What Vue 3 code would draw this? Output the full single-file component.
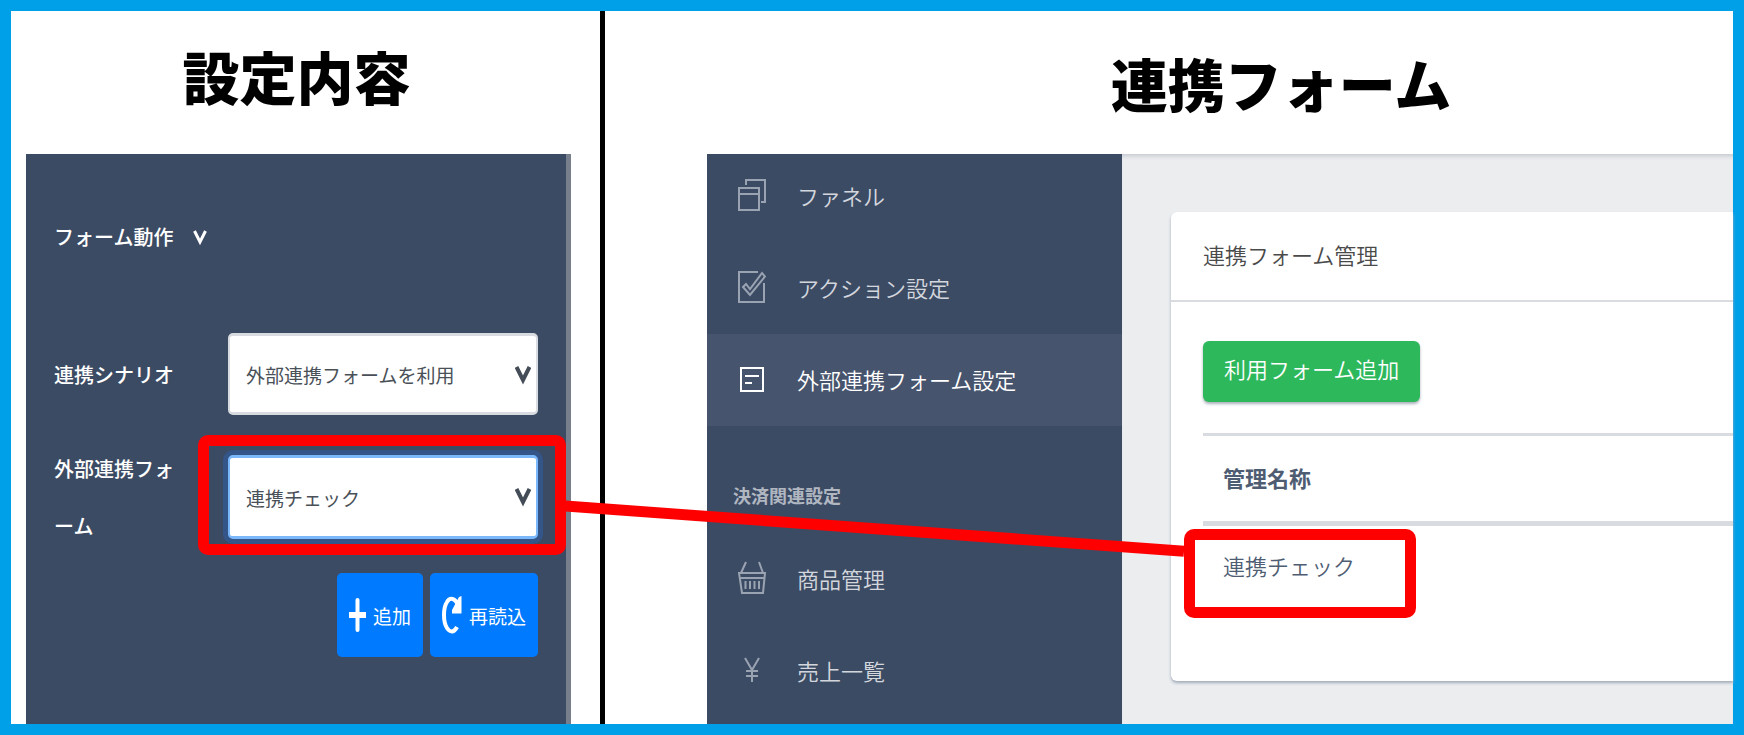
<template>
  <main ref="page" class="page">
    <section class="pane settings">
      <h1 class="title">設定内容</h1>
      <form class="panel" @submit.prevent>
        <button type="button" class="toggle">
          フォーム動作
          <svg class="toggle-icon" viewBox="0 0 14 18">
            <path d="M1.5 3 L7 14 L12.5 3" />
          </svg>
        </button>

        <div class="row">
          <label for="scenario">連携シナリオ</label>
          <div class="field">
            <select id="scenario" v-model="scenario">
              <option>外部連携フォームを利用</option>
            </select>
            <svg class="caret" viewBox="0 0 16 21">
              <path d="M1.5 2 L8 15 L14.5 2" />
            </svg>
          </div>
        </div>

        <div class="row">
          <label for="form">外部連携フォーム</label>
          <div class="field">
            <select id="form" v-model="form" class="focused">
              <option>連携チェック</option>
            </select>
            <svg class="caret" viewBox="0 0 16 21">
              <path d="M1.5 2 L8 15 L14.5 2" />
            </svg>
            <span ref="source" class="marker marker-field"></span>
          </div>
        </div>

        <div class="actions">
          <button type="button" class="btn">
            <svg class="plus" viewBox="0 0 17 34">
              <path d="M8.5 2 V32" />
              <path class="bar" d="M2 17 H15" />
            </svg>
            追加
          </button>
          <button type="button" class="btn">
            <svg class="reload" viewBox="0 0 20 38">
              <path d="M15 31 C12 37 8 36.500 5 32 C1 26 1 12 5 6 C8 1 13 2 16 9" />
              <path class="solid" d="M19.500 0 V17.500 H10 V14 L17 1 Z" />
            </svg>
            再読込
          </button>
        </div>
      </form>
    </section>

    <section class="pane linked">
      <h1 class="title">連携フォーム</h1>
      <div class="app">
        <nav class="sidebar">
          <a href="#funnel" class="item">
            <svg viewBox="0 0 28 34">
              <path d="M1 10 H21 V32 H1 Z M1 16 H21 M8 7 V2 H27 V24 H23" />
            </svg>
            ファネル
          </a>
          <a href="#action" class="item">
            <svg viewBox="0 0 28 34">
              <path d="M20 2 H1 V32 H26 V13" />
              <path d="M5 17 L8 14 L12 19 L24 3 L27 6.500 L12 25 Z" />
            </svg>
            アクション設定
          </a>
          <a href="#forms" class="item active">
            <svg viewBox="0 0 28 34">
              <path d="M3 6 H25 V29 H3 Z M7 14 H21 M7 21 H14" />
            </svg>
            外部連携フォーム設定
          </a>
          <h2 class="group">決済関連設定</h2>
          <a href="#products" class="item">
            <svg viewBox="0 0 28 34">
              <path d="M1 12 H27 L25 32 H4 Z M2 17 H26 M3 12 L8 1 M25 12 L21 1" />
              <path d="M7.500 20 V28 M12 20 V28 M16.500 20 V28 M21 20 V28" />
            </svg>
            商品管理
          </a>
          <a href="#sales" class="item">
            <svg viewBox="0 0 28 34">
              <path d="M7 5 L14 17 L21 5 M14 17 V29 M8 18 H20 M8 23 H20" />
            </svg>
            売上一覧
          </a>
        </nav>

        <div class="content">
          <div class="card">
            <h2 class="card-header">連携フォーム管理</h2>
            <div class="card-body">
              <button type="button" class="btn-add">利用フォーム追加</button>
              <table>
                <thead>
                  <tr>
                    <th scope="col">管理名称</th>
                  </tr>
                </thead>
                <tbody>
                  <tr v-for="name in forms" :key="name">
                    <td>
                      {{ name }}
                      <span ref="targets" class="marker marker-cell"></span>
                    </td>
                  </tr>
                </tbody>
              </table>
            </div>
          </div>
        </div>
      </div>
    </section>

    <svg class="connector">
      <line :x1="line.x1" :y1="line.y1" :x2="line.x2" :y2="line.y2" />
    </svg>
  </main>
</template>

<script setup>
import { ref, reactive, onMounted, onUnmounted } from "vue";

const scenario = ref("外部連携フォームを利用");
const form = ref("連携チェック");
const forms = ["連携チェック"];

const page = ref(null);
const source = ref(null);
const targets = ref([]);
const line = reactive({ x1: 0, y1: 0, x2: 0, y2: 0 });

// joins the right side of the first marker to the left side of the second
function updateLine() {
  const base = page.value.getBoundingClientRect();
  const from = source.value.getBoundingClientRect();
  const to = targets.value[0].getBoundingClientRect();
  const left = base.left + page.value.clientLeft;
  const top = base.top + page.value.clientTop;

  line.x1 = from.right - left - 4;
  line.y1 = from.top + from.height * 0.59 - top;
  line.x2 = to.left - left;
  line.y2 = to.top + to.height / 4 - top;
}

onMounted(() => {
  window.addEventListener("resize", updateLine);
  updateLine();
});

onUnmounted(() => {
  window.removeEventListener("resize", updateLine);
});
</script>

<style>
body {
  margin: 0;
}
</style>

<style scoped>
* {
  box-sizing: border-box;
}

.page {
  position: relative;
  display: grid;
  grid-template-columns: 594fr 1128fr;
  min-height: 100vh;
  border: 11px solid #00a0e9;
  background: #fff;
  font-family: "Noto Sans CJK JP", sans-serif;
}

button,
select {
  font-family: inherit;
}

.pane {
  display: flex;
  flex-direction: column;
  min-width: 0;
}

.title {
  margin: 0;
  height: 143px;
  color: #000;
  font-size: 57px;
  font-weight: 900;
  line-height: 128px;
  text-align: center;
  white-space: nowrap;
}

/* left side */
.settings {
  padding: 0 29px 0 15px;
  border-right: 5px solid #000;
}

.settings .title {
  padding-right: 4px;
}

.panel {
  flex: 1;
  display: flex;
  flex-direction: column;
  padding: 68px 28px 0;
  border-right: 5px solid #777f8d;
  background: #3c4b64;
  color: #fff;
  font-size: 20px;
}

.toggle {
  display: flex;
  align-items: center;
  align-self: flex-start;
  gap: 20px;
  margin-bottom: 81px;
  padding: 0;
  border: 0;
  background: none;
  color: #fff;
  font-size: 20px;
  font-weight: 500;
  line-height: 30px;
}

.toggle-icon {
  width: 14px;
  height: 18px;
  fill: none;
  stroke: #fff;
  stroke-width: 3;
}

.row {
  display: grid;
  grid-template-columns: 174fr 310fr;
  align-items: center;
  margin-bottom: 25px;
}

.row + .row {
  margin-bottom: 19px;
}

.row label {
  padding-right: 50px;
  font-weight: 500;
  line-height: 57px;
  line-break: anywhere;
}

.field {
  position: relative;
}

select {
  display: block;
  width: 100%;
  height: 82px;
  padding: 0 40px 0 16px;
  border: 2px solid #d8dbe0;
  border-width: 3px 2px;
  border-radius: 5px;
  outline: 0;
  background: #fff;
  color: #495057;
  font-size: 19px;
  appearance: none;
}

select.focused {
  height: 84px;
  border-color: #7ab8fb;
  box-shadow: 0 0 0 5px #335588;
}

.caret {
  position: absolute;
  top: 32px;
  right: 7px;
  width: 16px;
  height: 21px;
  fill: none;
  stroke: #444d57;
  stroke-width: 4;
  pointer-events: none;
}

.actions {
  display: flex;
  justify-content: flex-end;
  gap: 7px;
}

.btn {
  display: flex;
  align-items: center;
  gap: 7px;
  height: 84px;
  padding: 0 12px;
  border: 0;
  border-radius: 5px;
  background: #007bff;
  color: #fff;
  font-size: 19px;
  white-space: nowrap;
}

.btn svg {
  fill: none;
  stroke: #fff;
}

.btn .plus {
  width: 17px;
  height: 34px;
  stroke-width: 4;
  stroke-linecap: round;
}

.btn .bar {
  stroke-width: 6;
  stroke-linecap: square;
}

.btn .reload {
  width: 20px;
  height: 38px;
  stroke-width: 4;
}

.btn .solid {
  fill: #fff;
  stroke: none;
}

/* right side */
.linked {
  padding-left: 102px;
}

.linked .title {
  padding-left: 122px;
  line-height: 142px;
}

.app {
  flex: 1;
  display: grid;
  grid-template-columns: 415fr 611fr;
}

.sidebar {
  overflow: hidden;
  background: #3c4b64;
}

.item {
  display: flex;
  align-items: center;
  gap: 31px;
  height: 92px;
  padding: 0 0 2px 31px;
  color: #d3d7dd;
  font-size: 22px;
  font-weight: 350;
  text-decoration: none;
  white-space: nowrap;
}

.item:first-child {
  margin-top: -4px;
}

.item svg {
  width: 28px;
  height: 34px;
  fill: none;
  stroke: #9aa3b2;
  stroke-width: 2;
}

.item.active {
  background: #47546d;
  color: #fff;
}

.item.active svg {
  stroke: #fff;
}

.group {
  margin: 0;
  padding: 57px 26px 26px;
  color: #b1b7c1;
  font-size: 18px;
  font-weight: 700;
  line-height: 24px;
}

.content {
  padding: 58px 0 43px 49px;
  background: #ebedef;
  box-shadow: inset 0 5px 4px -3px #c4c8d0;
}

.card {
  border-radius: 6px 0 0 6px;
  background: #fff;
  box-shadow: 0 2px 3px #a3acba;
}

.card-header {
  margin: 0;
  padding: 27px 32px 31px;
  border-bottom: 2px solid #d8dbe0;
  color: #4a4a4a;
  font-size: 22px;
  font-weight: 350;
  line-height: 30px;
}

.card-body {
  padding: 39px 0 73px 32px;
}

.btn-add {
  display: block;
  height: 61px;
  margin-bottom: 31px;
  padding: 0 21px 8px;
  border: 0;
  border-radius: 6px;
  background: #2eb85c;
  box-shadow: 0 2px 3px #a9afba;
  color: #fff;
  font-size: 22px;
  font-weight: 350;
}

table {
  width: 100%;
  border-collapse: separate;
  border-spacing: 0;
  color: #4f5d73;
  font-size: 22px;
  text-align: left;
}

th {
  height: 93px;
  padding: 0 20px 4px;
  border-top: 3px solid #d8dbe0;
  border-bottom: 5px solid #d8dbe0;
  font-weight: 700;
}

td {
  position: relative;
  height: 82px;
  padding: 0 20px 4px;
  font-weight: 350;
}

/* red annotations */
.marker {
  position: absolute;
  border: 11px solid #f00;
  border-radius: 10px;
  pointer-events: none;
}

.marker-field {
  inset: -20px -28px -16px -30px;
}

.marker-cell {
  top: 3px;
  bottom: -10px;
  left: -19px;
  width: 232px;
}

.connector {
  position: absolute;
  top: 0;
  left: 0;
  width: 100%;
  height: 100%;
  pointer-events: none;
}

.connector line {
  stroke: #f00;
  stroke-width: 11;
}
</style>
